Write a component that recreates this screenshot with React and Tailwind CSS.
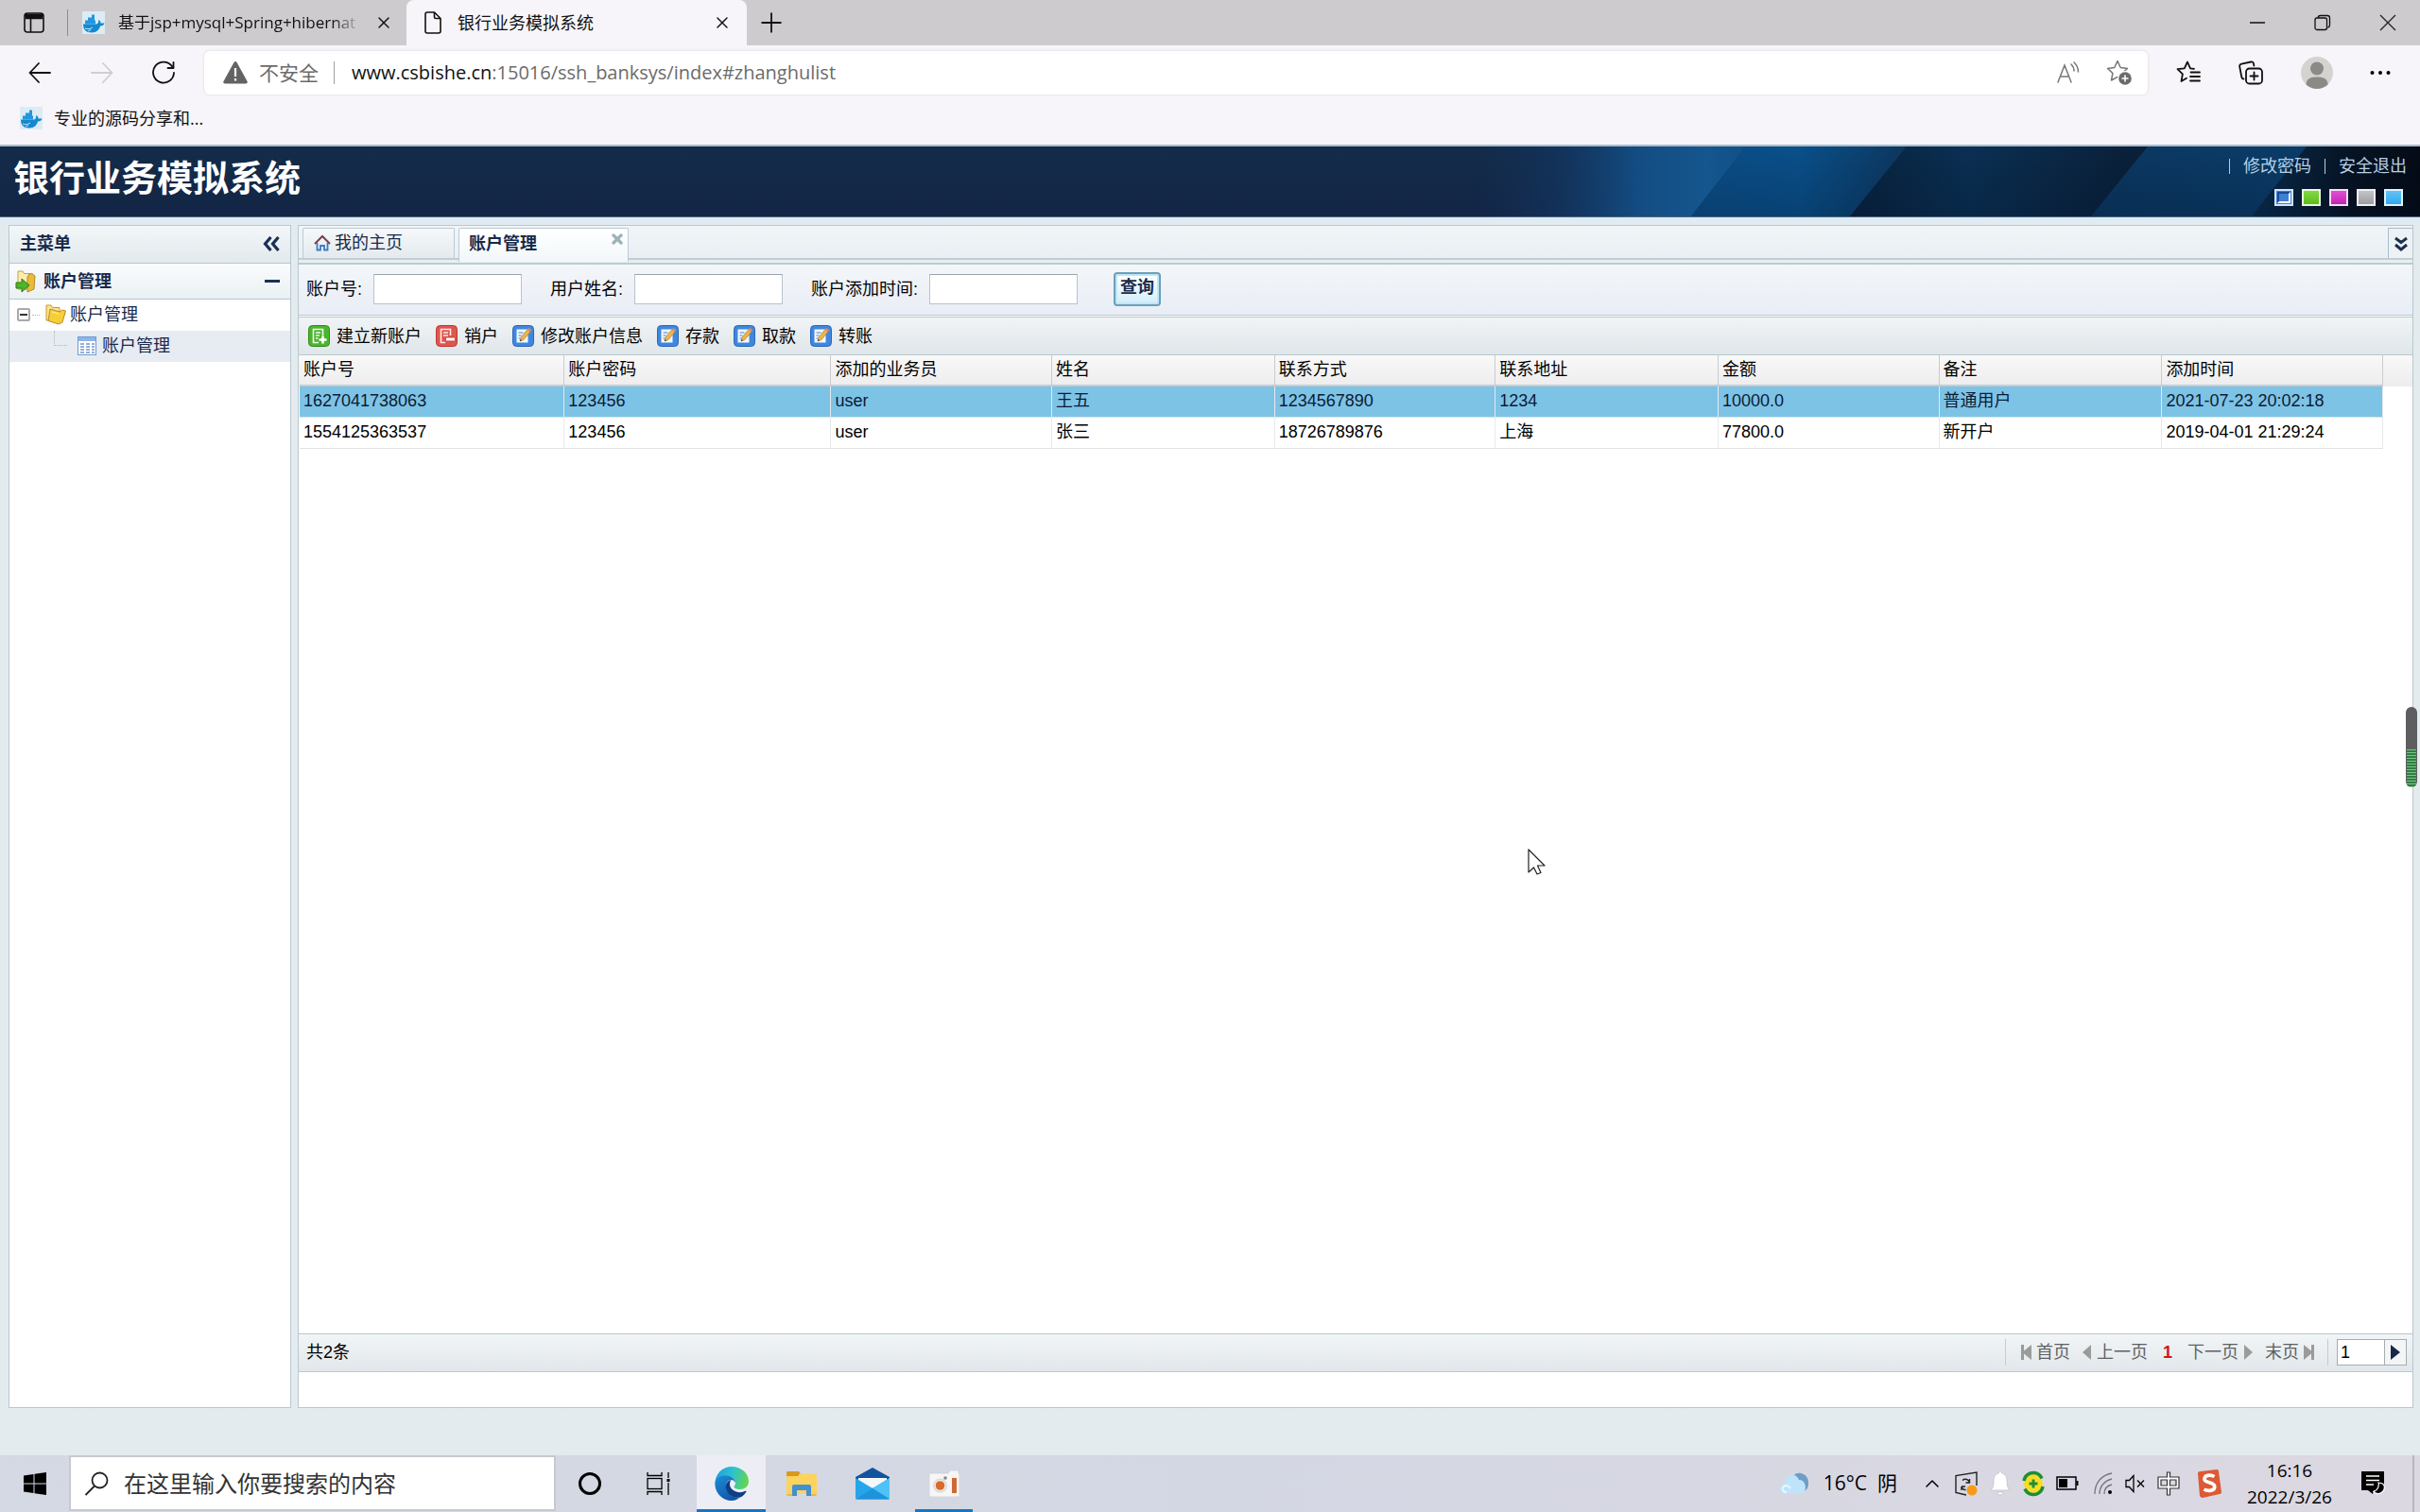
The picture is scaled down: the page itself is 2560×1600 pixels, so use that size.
import React, { useState } from "react";
import { ChevronUp, X } from "lucide-react";

const accounts = [
  { no: "1627041738063", pwd: "123456", clerk: "user", name: "王五", phone: "1234567890", address: "1234", amount: "10000.0", remark: "普通用户", time: "2021-07-23 20:02:18" },
  { no: "1554125363537", pwd: "123456", clerk: "user", name: "张三", phone: "18726789876", address: "上海", amount: "77800.0", remark: "新开户", time: "2019-04-01 21:29:24" },
];

const columns = [
  { key: "no", label: "账户号", width: "w-[12.7%]" },
  { key: "pwd", label: "账户密码", width: "w-[12.8%]" },
  { key: "clerk", label: "添加的业务员", width: "w-[10.6%]" },
  { key: "name", label: "姓名", width: "w-[10.7%]" },
  { key: "phone", label: "联系方式", width: "w-[10.6%]" },
  { key: "address", label: "联系地址", width: "w-[10.7%]" },
  { key: "amount", label: "金额", width: "w-[10.6%]" },
  { key: "remark", label: "备注", width: "w-[10.7%]" },
  { key: "time", label: "添加时间", width: "w-[10.6%]" },
];

/* ---------- icons ---------- */

const Whale = () => (
  <svg className="w-6 h-6 shrink-0" viewBox="0 0 24 24">
    <rect width="24" height="24" fill="#dcecf5" />
    <path d="M1 13.500h14c2-.5 2.500-2 2-4.500 2 1 2.500 2 2.500 3.500h4c-.5 2-2 3-4.500 3-1 4-4 7-9 7-6 0-9-3-9-9z" fill="#1488d0" />
    <path d="M3 9.500h11v4H3zM6 6.500h7v3H6zM10 3.500h3v3h-3z" fill="#2496e0" />
    <path d="M3 18c3 1 5 1 8-1M6 21l3-1.500" stroke="#bfe3f6" strokeWidth="1" fill="none" />
  </svg>
);

const TabActions = () => (
  <svg className="w-[22px] h-[22px]" viewBox="0 0 22 22" fill="none" stroke="#111" strokeWidth="1.6">
    <rect x="1" y="1" width="20" height="20" rx="3" />
    <path d="M2 4h18M2 6h18M1 3h20" strokeWidth="2.4" />
    <path d="M7.500 7v14" />
  </svg>
);

const FileIcon = () => (
  <svg className="w-5 h-6 shrink-0" viewBox="0 0 20 24" fill="none" stroke="#111" strokeWidth="1.6" strokeLinejoin="round">
    <path d="M4 1h7.500L18 7.500V21a2 2 0 0 1-2 2H4a2 2 0 0 1-2-2V3a2 2 0 0 1 2-2z" />
    <path d="M11.500 1v5a1.500 1.500 0 0 0 1.500 1.500h5" />
  </svg>
);

const BackArrow = () => (
  <svg className="w-6 h-6" viewBox="0 0 24 24" fill="none" stroke="currentColor" strokeWidth="1.8" strokeLinecap="round" strokeLinejoin="round">
    <path d="M23 12H1.500M11 2L1.500 12 11 22" />
  </svg>
);

const Refresh = () => (
  <svg className="w-[26px] h-[26px]" viewBox="0 0 26 26" fill="none" stroke="#111" strokeWidth="1.8" strokeLinecap="round" strokeLinejoin="round">
    <path d="M22.500 7A11 11 0 1 0 24 13M23.500 2v6h-6" />
  </svg>
);

const ReadAloud = () => (
  <svg className="w-6 h-6" viewBox="0 0 24 24" fill="none" stroke="#777" strokeWidth="1.500" strokeLinecap="round">
    <path d="M1 22L8 4l7 18M3.500 16h9M15 3c2 2 3 4 3 7M18 1c3 3 4.500 6 4.500 10" />
  </svg>
);

const STAR = "M12 1.500l3.200 7 7.300.9-5.400 5.100 1.400 7.500-6.500-3.700L5.500 22l1.400-7.500L1.500 9.400l7.300-.9z";

const StarPlus = () => (
  <svg className="w-7 h-7" viewBox="0 0 28 28">
    <path d={STAR} fill="none" stroke="#777" strokeWidth="1.500" strokeLinejoin="round" />
    <circle cx="20" cy="20" r="8" fill="#fff" />
    <circle cx="20" cy="20" r="6.800" fill="#6b6b6b" />
    <path d="M20 16.500v7M16.500 20h7" stroke="#fff" strokeWidth="1.600" />
  </svg>
);

const Favorites = () => (
  <svg className="w-[26px] h-[26px]" viewBox="0 0 26 26" fill="none" stroke="#111" strokeWidth="1.800" strokeLinecap="round" strokeLinejoin="round">
    <path d="M19 8.800l-4-.5L12 1.500 8.800 8.300l-7.300.9 5.400 5.100L5.500 22l5.500-3.200M15.500 12.500H25M15 17h10M15 21.500h10" />
  </svg>
);

const Collections = () => (
  <svg className="w-[26px] h-[26px]" viewBox="0 0 26 26" fill="none" stroke="#111" strokeWidth="1.800" strokeLinecap="round" strokeLinejoin="round">
    <path d="M5.500 19.500c-1.500 0-2-1-2.200-2L1.200 6.500c-.3-1.500.5-2.500 2-2.800l10-2.200c1.500-.3 2.500.5 2.800 2l.4 2" />
    <rect x="8" y="8.500" width="17" height="16" rx="3.500" />
    <path d="M16.500 12.500v8M12.500 16.500h8" />
  </svg>
);

const Avatar = () => (
  <svg className="w-[34px] h-[34px]" viewBox="0 0 34 34">
    <circle cx="17" cy="17" r="17" fill="#d5d3d0" />
    <circle cx="17" cy="12.500" r="7" fill="#8c8986" />
    <path d="M5.500 29.500C5.500 23 11 21.500 17 21.500s11.500 1.500 11.500 8a17 17 0 0 1-23 0z" fill="#8c8986" />
  </svg>
);

const HeaderArt = () => (
  <svg className="absolute right-0 top-0 h-full w-[1000px]" viewBox="0 0 1000 74" preserveAspectRatio="none">
    <defs>
      <linearGradient id="hg1" x1="0" x2="1">
        <stop offset="0" stopColor="#12305a" stopOpacity="0" />
        <stop offset="0.300" stopColor="#123764" stopOpacity="0.600" />
        <stop offset="0.600" stopColor="#134c82" />
        <stop offset="0.850" stopColor="#15568e" />
        <stop offset="1" stopColor="#115087" />
      </linearGradient>
      <linearGradient id="hg2" x1="0" x2="1">
        <stop offset="0" stopColor="#0c4d86" />
        <stop offset="0.500" stopColor="#09508b" />
        <stop offset="1" stopColor="#0d375f" />
      </linearGradient>
      <linearGradient id="hg3" x1="0" x2="1">
        <stop offset="0" stopColor="#08233f" />
        <stop offset="0.400" stopColor="#0a3054" />
        <stop offset="1" stopColor="#0a1f38" />
      </linearGradient>
      <linearGradient id="hg4" x1="0" x2="1">
        <stop offset="0" stopColor="#0b3862" />
        <stop offset="1" stopColor="#0a3c69" />
      </linearGradient>
      <linearGradient id="hg5" x1="0" x2="1">
        <stop offset="0" stopColor="#0a2d50" />
        <stop offset="0.600" stopColor="#061324" />
        <stop offset="1" stopColor="#050b17" />
      </linearGradient>
      <linearGradient id="hgs" x1="0" x2="0" y1="0" y2="1">
        <stop offset="0" stopColor="#000" stopOpacity="0" />
        <stop offset="1" stopColor="#00081c" stopOpacity="0.200" />
      </linearGradient>
    </defs>
    <path d="M0 0H287L229 74H0z" fill="url(#hg1)" />
    <path d="M287 0H457L397 74H229z" fill="url(#hg2)" />
    <path d="M457 0H712L652 74H397z" fill="url(#hg3)" />
    <path d="M712 0H880L822 74H652z" fill="url(#hg4)" />
    <path d="M880 0H1000V74H822z" fill="url(#hg5)" />
    <path d="M287 0H1000V74H229z" fill="url(#hgs)" />
  </svg>
);

const FolderArrow = () => (
  <svg className="w-6 h-6 shrink-0" viewBox="0 0 24 24">
    <path d="M3 1h5l1.500 2.500H16V20H3z" fill="#fbedb0" stroke="#c9a03c" />
    <path d="M15 4l3-.5 3 2.500-1 14-7 3V7z" fill="#e9bb3d" stroke="#b98a22" />
    <path d="M1 13h6V9l8 7-8 7v-4H1z" fill="#4cb52c" stroke="#2c7d16" />
  </svg>
);

const FolderOpen = () => (
  <svg className="w-[22px] h-[22px] shrink-0" viewBox="0 0 22 22">
    <path d="M1 1h5l1.500 2.500H15V17H1z" fill="#fbe58b" stroke="#c9982c" />
    <path d="M14 21L3 17.500 5 5l10 3 3-2 3.500 1L18 19z" fill="#f6ce38" stroke="#bb8a1c" />
    <path d="M7 8l7 2" stroke="#fff3b5" />
  </svg>
);

const GridIcon = () => (
  <svg className="w-5 h-5 shrink-0" viewBox="0 0 20 20">
    <rect x="0.500" y="0.500" width="19" height="19" fill="#fff" stroke="#6f9bd6" />
    <rect x="1" y="1" width="18" height="4" fill="#8db5ea" />
    <path d="M3 8h4m2 0h4m2 0h3M3 11h4m2 0h4m2 0h3M3 14h4m2 0h4m2 0h3M3 17h4m2 0h4m2 0h3" stroke="#6f97d0" strokeWidth="1.600" />
  </svg>
);

const HomeIcon = () => (
  <svg className="w-[18px] h-[18px] shrink-0" viewBox="0 0 18 18" fill="none">
    <path d="M3.500 9v7.500h3.500V12h4v4.500h3.500V9" stroke="#3c7cc0" strokeWidth="1.800" fill="#e8f1fb" />
    <path d="M1 10L9 2l8 8" stroke="#7d3d4a" strokeWidth="2" />
  </svg>
);

const AddIcon = () => (
  <svg className="w-[23px] h-[23px] shrink-0" viewBox="0 0 23 23">
    <rect x="0.500" y="0.500" width="22" height="22" rx="4" fill="#4bb52f" stroke="#2f8a1a" />
    <path d="M15.500 11V4.500h-10v14h5.500M8 8h5M8 11h4M8 14h2.500" stroke="#f0ffe9" strokeWidth="1.600" fill="none" />
    <path d="M15.500 11.500v8M11.500 15.500h8" stroke="#fff" strokeWidth="2.600" />
  </svg>
);

const RemoveIcon = () => (
  <svg className="w-[23px] h-[23px] shrink-0" viewBox="0 0 23 23">
    <rect x="0.500" y="0.500" width="22" height="22" rx="4" fill="#e0564e" stroke="#b93a34" />
    <path d="M15.500 11V4.500h-10v14h4.500M8 8h5M8 11h5" stroke="#ffeceb" strokeWidth="1.600" fill="none" />
    <rect x="10.500" y="13" width="10" height="4" rx="1" fill="#fff" stroke="#c9443e" />
  </svg>
);

const EditIcon = () => (
  <svg className="w-[23px] h-[23px] shrink-0" viewBox="0 0 23 23">
    <rect x="0.500" y="0.500" width="22" height="22" rx="4" fill="#3f87de" stroke="#2a66b8" />
    <rect x="4.500" y="4.500" width="12" height="14" fill="#f4f8fd" />
    <path d="M6.500 8h5M6.500 11h3M6.500 14h2" stroke="#7ba7dd" strokeWidth="1.400" />
    <path d="M8 17l1-4 7-8.500 3 2.500-7 8.500z" fill="#f0b548" stroke="#a87c34" strokeWidth="0.700" />
    <path d="M16 4.500l1.500-1.500 3 2.500-1.500 1.500z" fill="#d78a80" />
    <path d="M8 17l.5-2 1.500 1.200z" fill="#333" />
  </svg>
);

const EdgeIcon = () => (
  <svg className="w-9 h-9" viewBox="0 0 36 36">
    <defs>
      <linearGradient id="e1" x1="0" x2="1" y1="0.300" y2="0.500">
        <stop offset="0" stopColor="#1d9fe0" />
        <stop offset="0.500" stopColor="#2fc1d0" />
        <stop offset="1" stopColor="#62d74c" />
      </linearGradient>
      <linearGradient id="e2" x1="0" x2="0.600" y1="0" y2="1">
        <stop offset="0" stopColor="#1a8fd8" />
        <stop offset="1" stopColor="#1256a8" />
      </linearGradient>
    </defs>
    <path d="M0.500 15.500C2 6 9 0 18 0c10 0 18 7 18 15.500 0 5-4 8.500-9 8.500-4 0-6.500-1.500-6.500-2.800 0-.9 1.500-1.500 1.500-4.200C22 13 17 10 12 10 6 10 2 12.500.5 15.500z" fill="url(#e1)" />
    <path d="M0.500 15.500C2 12 6 9.500 11 9.500c6 0 11 3.500 11 7.500-1-2-2.500-3-4.500-3-4 0-6 4-5.500 8 .8 7 8 12 14.500 10.500C24 35 21 36 18 36 7 36-1 26 .5 15.500z" fill="url(#e2)" />
    <path d="M17.500 14c-4.500 1-6.500 5-5.500 9.500C13.500 30 20 34 27 32.500c3-1 5-3.500 6.500-6 .3-.7-.4-1-1-.7-7 3.500-16-.3-16.500-6.800-.1-2 .5-4 1.500-5z" fill="#0c3f86" />
  </svg>
);

const ExplorerIcon = () => (
  <svg className="w-8 h-[26px]" viewBox="0 0 32 26">
    <path d="M0 1.500Q0 0 1.500 0H13l2 3h-2v4H0z" fill="#d9991f" />
    <path d="M0 5h13l2.500-2.500H30q2 0 2 2V24H0z" fill="#fcd35c" />
    <path d="M6 26V16q0-2 2-2h16q2 0 2 2v10h-5v-6H11v6z" fill="#4191d2" />
    <path d="M0 24h6v2H2q-2 0-2-2zM26 24h6q0 2-2 2h-4z" fill="#e9b83e" />
  </svg>
);

const MailIcon = () => (
  <svg className="w-9 h-[34px]" viewBox="0 0 36 34">
    <path d="M0 10L18 0l18 10v4H0z" fill="#12539f" />
    <path d="M3 11h30v10H3z" fill="#f3f8fc" />
    <path d="M0 11l18 11L36 11v21q0 1.500-1.500 1.500h-33Q0 33.500 0 32z" fill="#26a6ea" />
    <path d="M36 11v22L18 22z" fill="#4fc3f7" />
    <path d="M0 33.500L18 22l18 11.500z" fill="#1d93dc" />
  </svg>
);

const RecorderIcon = () => (
  <svg className="w-8 h-7" viewBox="0 0 32 28">
    <path d="M0 3h20l2-3h9v3h1v25H0z" fill="#f7f6f7" stroke="#cfcdd2" strokeWidth="0.800" />
    <circle cx="11.500" cy="16" r="7.500" fill="#dcd6d8" />
    <circle cx="11.500" cy="16" r="6" fill="#f3efef" />
    <circle cx="11.500" cy="16" r="4.800" fill="#d96a2b" />
    <circle cx="17" cy="8" r="1.800" fill="#8b8083" />
    <rect x="24" y="8" width="5" height="16" fill="#cf6a33" />
  </svg>
);

const TrayIcons = () => (
  <div className="flex items-center">
    <svg className="w-6 h-[26px]" viewBox="0 0 24 26" fill="none" stroke="#222" strokeWidth="1.400">
      <path d="M12 25L1 22.500V4.500l22-3.500v14M8 9.500a4.500 4.500 0 0 1 7.500 2.500m0-4v4h-4M7 16h4m-4 0v4m0-3.500a4.500 4.500 0 0 0 4.500 3" />
      <circle cx="18" cy="20" r="5.500" fill="#fb9a17" stroke="none" />
    </svg>
    <svg className="ml-[13px] w-[22px] h-7" viewBox="0 0 22 28" fill="#fff" stroke="#c0c2ca" strokeWidth="0.800">
      <path d="M11 1c1 0 1.500.7 1.500 1.800C16.500 4 18 7 18 11c0 5 1 8 3 10H1c2-2 3-5 3-10 0-4 1.500-7 5.500-8.200C9.500 1.700 10 1 11 1zM8 23h6c0 2-1.500 3-3 3s-3-1-3-3z" />
    </svg>
    <svg className="ml-3 w-6 h-7" viewBox="0 0 24 28">
      <ellipse cx="12" cy="14" rx="10" ry="10" fill="#f7dc28" />
      <path d="M2 11C3 5 8 2 13 2.500c4 .5 6.500 2.500 8 6M22 17c-1 6-6 9-11 8.500-4-.5-6.500-2.500-8-6" fill="none" stroke="#1d8e36" strokeWidth="3.500" />
      <path d="M12 9.500v9M7.500 14h9" stroke="#1d8e36" strokeWidth="2.800" />
    </svg>
    <svg className="ml-3 w-6 h-4" viewBox="0 0 24 16">
      <rect x="1" y="1" width="20" height="13" fill="none" stroke="#000" strokeWidth="1.500" />
      <rect x="3" y="3" width="9" height="9" />
      <rect x="21.500" y="5" width="2" height="5" />
    </svg>
    <svg className="ml-4 w-5 h-6" viewBox="0 0 20 24" fill="none" stroke="#77777d" strokeWidth="1.300">
      <path d="M1 23C1 11 8 3 19 1M6 23C6 15 11 9 19 7M11 23c0-5 3-9 8-10" />
      <circle cx="17" cy="21" r="2" fill="#000" stroke="none" />
    </svg>
    <svg className="ml-[13px] w-[22px] h-5" viewBox="0 0 22 20" fill="none" stroke="#000" strokeWidth="1.300">
      <path d="M1 6.500h3.500L9 1.500v17l-4.500-5H1zM13 6.500l7 7m0-7l-7 7" />
    </svg>
    <svg className="ml-3 w-6 h-[26px]" viewBox="0 0 24 26" fill="#fff" stroke="#333" strokeWidth="1.200">
      <path fillRule="evenodd" d="M10.500 1h3v5H23v12h-9.500v7h-3v-7H1V6h9.500zM4 9v6h6.500V9zM13.500 9v6H20V9z" />
    </svg>
    <svg className="ml-[18px] w-[26px] h-[30px]" viewBox="0 0 26 30">
      <path d="M1 4Q1 2 4 2l17-2q2 0 2 2l3 22q0 2-2 2L6 30q-2 0-3-2z" fill="#dd5a34" />
      <path d="M18.500 7.500C14 5 7.500 6 8 10.500c.5 4 10.500 2.500 10.800 7.500.3 4.500-7 5.500-11.300 3" stroke="#fff" strokeWidth="3.600" fill="none" />
    </svg>
  </div>
);

const PageArrow = ({ flip, bar }) => (
  <svg className={`w-[11px] h-4 shrink-0 ${flip ? "rotate-180" : ""}`} viewBox="0 0 11 16" fill="#9b9b9b">
    {bar ? <path d="M0 0h3v6.500L11 0v16L3 9.500V16H0z" /> : <path d="M1 8l9-8v16z" />}
  </svg>
);

/* ---------- browser chrome ---------- */

const Browser = () => (
  <div className="font-['Open_Sans','Noto_Sans_CJK_SC',sans-serif] text-[18px] leading-6 text-[#111] bg-[#f7f5f9]">
    <div className="h-12 bg-[#cdcbce] flex items-stretch">
      <button aria-label="Tab actions" className="ml-[25px] flex items-center"><TabActions /></button>
      <div className="w-px my-[10px] ml-6 bg-[#8d8b8e]" />
      <div className="w-[358px] pl-[15px] pr-[14px] flex items-center gap-[14px]">
        <Whale />
        <span className="flex-1 whitespace-nowrap text-[17px] [mask-image:linear-gradient(to_right,black_88%,transparent)]">基于jsp+mysql+Spring+hibernat</span>
        <button aria-label="Close tab"><X className="w-5 h-5" strokeWidth={1.7} /></button>
      </div>
      <div className="w-[360px] pl-[18px] pr-4 flex items-center gap-4 rounded-t-lg bg-[#f7f5f9]">
        <FileIcon />
        <span className="flex-1 whitespace-nowrap">银行业务模拟系统</span>
        <button aria-label="Close tab"><X className="w-5 h-5" strokeWidth={1.7} /></button>
      </div>
      <button aria-label="New tab" className="ml-[14px]">
        <svg className="w-6 h-6" viewBox="0 0 24 24" stroke="#111" strokeWidth="1.800"><path d="M12 1.500v21M1.500 12h21" /></svg>
      </button>
      <div className="ml-auto mr-[25px] flex items-center gap-[51px]">
        <button aria-label="Minimize">
          <svg className="w-[18px] h-[18px]" viewBox="0 0 18 18"><path d="M1 9h16" stroke="#111" strokeWidth="1.500" /></svg>
        </button>
        <button aria-label="Restore">
          <svg className="w-[18px] h-[18px]" viewBox="0 0 18 18" fill="none" stroke="#111" strokeWidth="1.300">
            <rect x="1" y="4" width="12.500" height="12.500" rx="2" /><path d="M4 3.500Q4.500 1.500 6.500 1.500H14q2.500 0 2.500 2.500v7.500q0 2-2 2.500" />
          </svg>
        </button>
        <button aria-label="Close window">
          <svg className="w-[18px] h-[18px]" viewBox="0 0 18 18"><path d="M1 1l16 16M17 1L1 17" stroke="#222" strokeWidth="1.300" /></svg>
        </button>
      </div>
    </div>

    <div className="h-[57px] flex items-center pl-[30px] pr-[30px]">
      <button aria-label="Back"><BackArrow /></button>
      <button aria-label="Forward" className="ml-[42px] rotate-180 text-[#cfcdd1]"><BackArrow /></button>
      <button aria-label="Refresh" className="ml-10"><Refresh /></button>
      <div className="ml-[30px] flex-1 h-[46px] bg-white rounded-md shadow-[0_0_3px_#d8d6da] flex items-center pl-5 pr-4">
        <svg className="w-[26px] h-6 shrink-0" viewBox="0 0 26 24">
          <path d="M11.500 1q1.500-2 3 0L25.500 21q1 2-1.500 2.500H2Q-.5 23 .5 21z" fill="#636363" />
          <path d="M13 7v9M13 18v2.500" stroke="#fff" strokeWidth="2.200" />
        </svg>
        <span className="ml-3 text-[21px] text-[#6b6b6b]">不安全</span>
        <span className="ml-4 w-px h-6 bg-[#a0a0a0]" />
        <div className="ml-[18px] flex-1 text-[20px] text-[#6b6b6b]"><span className="text-[#111]">www.csbishe.cn</span>:15016/ssh_banksys/index#zhanghulist</div>
        <button aria-label="Read aloud"><ReadAloud /></button>
        <button aria-label="Add favorite" className="ml-7"><StarPlus /></button>
      </div>
      <div className="ml-[30px] flex items-center">
        <button aria-label="Favorites"><Favorites /></button>
        <button aria-label="Collections" className="ml-10"><Collections /></button>
        <button aria-label="Profile" className="ml-10"><Avatar /></button>
        <button aria-label="Menu" className="ml-[38px]">
          <svg className="w-6 h-6" viewBox="0 0 24 24"><circle cx="3.500" cy="12" r="2" /><circle cx="12" cy="12" r="2" /><circle cx="20.500" cy="12" r="2" /></svg>
        </button>
      </div>
    </div>

    <div className="h-12 flex items-start pl-[21px] pt-2">
      <a href="#bookmark" className="flex items-center gap-3"><Whale />专业的源码分享和...</a>
    </div>
  </div>
);

/* ---------- application ---------- */

const AppHeader = () => (
  <header className="relative h-[77px] border-t-2 border-t-[#a9bccb] border-b border-b-[#51657c] bg-linear-to-b from-[#132c49] to-[#132546] flex justify-between">
    <HeaderArt />
    <h1 className="relative pl-[14px] pt-[5px] text-[38px] leading-[52px] font-bold text-white font-['Noto_Sans_CJK_SC',sans-serif]">银行业务模拟系统</h1>
    <div className="relative pr-[14px] pt-2 flex flex-col items-end">
      <div className="flex items-center gap-[14px] text-[18px] leading-[26px] text-[#b4cfe4]">
        <span className="w-px h-4 bg-[#b4cfe4]" />
        <a href="#password">修改密码</a>
        <span className="w-px h-4 bg-[#b4cfe4]" />
        <a href="#logout">安全退出</a>
      </div>
      <div className="mt-[11px] mr-1 flex gap-[9px]">
        <button aria-label="Blue theme" className="w-5 h-[18px] border-2 border-[#cfe4fb] bg-[#3f7fd4] p-px">
          <span className="block w-full h-full border-2 border-[#1d4a98] border-r-white border-b-white" />
        </button>
        <button aria-label="Green theme" className="w-5 h-[18px] border-2 border-[#e8f7dc] bg-linear-to-b from-[#83d842] to-[#5cbd12]" />
        <button aria-label="Pink theme" className="w-5 h-[18px] border-2 border-[#f9dcf5] bg-linear-to-b from-[#e24fd6] to-[#c421b5]" />
        <button aria-label="Gray theme" className="w-5 h-[18px] border-2 border-[#efeff0] bg-linear-to-b from-[#c5c4c8] to-[#9d9ca2]" />
        <button aria-label="Sky theme" className="w-5 h-[18px] border-2 border-[#dff2fd] bg-linear-to-b from-[#62c3f6] to-[#2fa8ee]" />
      </div>
    </div>
  </header>
);

const Sidebar = () => (
  <aside className="w-[299px] shrink-0 border border-[#b8c8cf] bg-white text-[#16294b]">
    <div className="h-10 px-[11px] pb-px flex items-center justify-between border-b border-[#b8c8cf] bg-linear-to-b from-[#f3f7f9] to-[#e1e9ec] font-bold">
      主菜单
      <button aria-label="Collapse menu">
        <svg className="w-[18px] h-4" viewBox="0 0 18 16" fill="none" stroke="#1b2f52" strokeWidth="3.200"><path d="M8.500 1L2.500 8l6 7M16.500 1l-6 7 6 7" /></svg>
      </button>
    </div>
    <div className="h-[38px] pl-[6px] pr-[11px] flex items-center border-b border-[#b8c8cf] bg-linear-to-b from-[#fbfcfd] to-[#eaf0f3] font-bold">
      <FolderArrow />
      <span className="ml-[6px] flex-1">账户管理</span>
      <button aria-label="Collapse group" className="h-4 flex items-center"><span className="w-4 h-[3px] bg-[#1b2f52]" /></button>
    </div>
    <div className="h-[33px] pl-2 pb-px flex items-center">
      <button aria-label="Collapse node" className="w-[14px] h-[14px] border-2 border-[#a9a9ad] rounded-xs flex items-center justify-center"><span className="w-2 h-[2px] bg-[#333]" /></button>
      <span className="w-2 ml-[2px] border-t border-dotted border-[#bbb]" />
      <span className="ml-[6px]"><FolderOpen /></span>
      <span className="ml-1">账户管理</span>
    </div>
    <div className="h-[33px] pl-[47px] pb-px flex items-center bg-[#e7ebf2]">
      <span className="w-[14px] h-4 mb-4 border-l border-b border-dotted border-[#b5b5ba]" />
      <span className="ml-[11px]"><GridIcon /></span>
      <a href="#zhanghulist" className="ml-[6px]">账户管理</a>
    </div>
  </aside>
);

const Field = ({ id, label }) => (
  <div className="flex items-center gap-3">
    <label htmlFor={id}>{label}:</label>
    <input id={id} type="text" className="w-[157px] h-8 px-1 bg-white border border-[#b9c3ca] border-t-[#9aa5ad] outline-none" />
  </div>
);

const ToolButton = ({ icon: Icon, children }) => (
  <button className="flex items-center gap-[7px]"><Icon />{children}</button>
);

const AccountGrid = () => {
  const [selected, setSelected] = useState(accounts[0].no);

  return (
    <div className="pl-px pr-[31px] bg-linear-to-b from-[#f9f9f9] to-[#eeeced] bg-size-[100%_33px] bg-no-repeat">
      <table className="w-full table-fixed border-collapse text-left">
        <thead>
          <tr className="h-8 border-b-2 border-[#c3cdd4]">
            {columns.map((c) => (
              <th key={c.key} className={`${c.width} p-0 pl-1 pb-px font-normal border-r border-[#c9ccd0]`}>{c.label}</th>
            ))}
          </tr>
        </thead>
        <tbody className="bg-white">
          {accounts.map((a) => (
            <tr
              key={a.no}
              onClick={() => setSelected(a.no)}
              className={`h-[33px] border-b border-[#e2e2e4] ${selected === a.no ? "bg-[#7dc3e6] text-[#0d1b33]" : "bg-white"}`}
            >
              {columns.map((c) => (
                <td key={c.key} className="p-0 pl-1 pb-[2px] border-r border-[#e6e9ec]">{a[c.key]}</td>
              ))}
            </tr>
          ))}
        </tbody>
      </table>
    </div>
  );
};

const Pager = () => (
  <div className="h-[41px] pl-2 pr-[6px] pb-px flex items-center border-y border-[#b8c8cf] bg-linear-to-b from-[#f2f5f7] to-[#e1e7ea]">
    <span className="flex-1 pb-px">共2条</span>
    <div className="flex items-center text-[#5f6163]">
      <span className="w-px h-7 bg-[#c3ccd1]" />
      <button className="ml-4 flex items-center gap-[5px]"><PageArrow bar />首页</button>
      <button className="ml-3 flex items-center gap-[5px]"><PageArrow />上一页</button>
      <span className="mx-4 font-bold text-[#d2161b]">1</span>
      <button className="flex items-center gap-[5px]">下一页<PageArrow flip /></button>
      <button className="ml-3 flex items-center gap-[5px]">末页<PageArrow bar flip /></button>
      <span className="ml-[14px] w-px h-7 bg-[#c3ccd1]" />
    </div>
    <input aria-label="Page number" defaultValue="1" className="ml-[9px] w-[51px] h-7 px-[3px] bg-white border border-[#a7acb1] text-black outline-none" />
    <button aria-label="Go to page" className="w-[23px] h-7 border border-l-0 border-[#a7acb1] bg-[#f4f5f6] flex items-center justify-center">
      <svg className="w-[10px] h-4" viewBox="0 0 10 16" fill="#16294b"><path d="M0 0l10 8-10 8z" /></svg>
    </button>
  </div>
);

const Content = () => (
  <main className="flex-1 min-w-0 flex flex-col border border-[#b8c8cf] bg-white text-black">
    <div className="h-[41px] shrink-0 border-b-2 border-[#bccbd1] bg-[#e6f0f3] flex flex-col">
      <div className="h-9 pt-[2px] pl-1 flex items-stretch border-b-2 border-[#c0ced3] bg-linear-to-b from-[#f1f5f7] to-[#e9eff5] text-[#16294b]">
        <button className="w-[161px] pl-[11px] pb-px flex items-center gap-1 border border-b-0 border-[#bccbd3] rounded-t-xs bg-linear-to-b from-[#f6f8fa] to-[#e3eaee]">
          <HomeIcon />我的主页
        </button>
        <div className="w-[180px] h-9 z-1 ml-1 pl-[10px] pr-[3px] pb-1 flex justify-between border border-b-0 border-[#bccbd3] rounded-t-xs bg-linear-to-b from-white to-[#f2f7f9]">
          <button className="font-bold">账户管理</button>
          <button aria-label="Close panel" className="h-5 pt-px"><X className="w-4 h-4 text-[#9eb3b9]" strokeWidth={5} /></button>
        </div>
        <button aria-label="More tabs" className="ml-auto w-[26px] flex items-center justify-center border border-r-0 border-b-0 border-[#a9bdcb] bg-[#edf2f5]">
          <svg className="w-[14px] h-4" viewBox="0 0 14 16" fill="none" stroke="#1b2f52" strokeWidth="3"><path d="M1 2l6 4.500L13 2M1 9l6 5 6-5" /></svg>
        </button>
      </div>
    </div>

    <form className="h-[54px] shrink-0 pl-2 pb-px flex items-center gap-[30px] bg-linear-to-b from-[#f3f6f9] to-[#e9edf5] border-b border-[#b8c8cf]" onSubmit={(e) => e.preventDefault()}>
      <Field id="accountNo" label="账户号" />
      <Field id="userName" label="用户姓名" />
      <Field id="createdAt" label="账户添加时间" />
      <button type="submit" className="ml-2 h-9 px-[5px] pb-1 rounded-sm border-2 border-[#6b9fba] bg-linear-to-b from-white to-[#d3edf9] shadow-[inset_0_0_0_2px_#bfe6f7] font-bold text-[#1b2b4a]">查询</button>
    </form>

    <div className="h-[41px] shrink-0 mt-px pl-[10px] flex items-center gap-[15px] border-y border-[#b8c8cf] bg-linear-to-b from-[#f1f4f6] to-[#dfe6e9]">
      <ToolButton icon={AddIcon}>建立新账户</ToolButton>
      <ToolButton icon={RemoveIcon}>销户</ToolButton>
      <ToolButton icon={EditIcon}>修改账户信息</ToolButton>
      <ToolButton icon={EditIcon}>存款</ToolButton>
      <ToolButton icon={EditIcon}>取款</ToolButton>
      <ToolButton icon={EditIcon}>转账</ToolButton>
    </div>

    <div className="flex-1"><AccountGrid /></div>
    <Pager />
    <div className="h-[37px] shrink-0" />
  </main>
);

const Taskbar = () => (
  <footer className="h-[60px] shrink-0 flex items-stretch bg-linear-to-r from-[#d5d9e3] via-[#d3d7e3] to-[#dcd8e2] font-['Open_Sans','Noto_Sans_CJK_SC',sans-serif] text-black">
    <button aria-label="Start" className="w-[73px] flex items-center justify-center">
      <svg className="w-6 h-6" viewBox="0 0 24 24"><path d="M0 3.400L10.500 2v9.500H0zM11.500 1.800L24 0v11.500H11.500zM0 12.500h10.500V22L0 20.600zM11.500 12.500H24V24l-12.500-1.800z" /></svg>
    </button>
    <label className="w-[515px] mb-px pl-[14px] flex items-center gap-4 border-2 border-[#c8c9ce] bg-white">
      <svg className="w-[26px] h-[26px] shrink-0" viewBox="0 0 26 26" fill="none" stroke="#222" strokeWidth="1.800"><circle cx="16.500" cy="9.500" r="8" /><path d="M11 15.500L1.500 25" /></svg>
      <input type="text" placeholder="在这里输入你要搜索的内容" className="flex-1 text-[24px] leading-8 placeholder:text-[#333] outline-none" />
    </label>
    <button aria-label="Cortana" className="ml-6 flex items-center"><span className="w-6 h-6 rounded-full border-3 border-black" /></button>
    <button aria-label="Task view" className="ml-12 flex items-center">
      <svg className="w-[26px] h-6" viewBox="0 0 26 24" fill="none" stroke="#000" strokeWidth="1.300">
        <path d="M1 0v3.500h15V0M1 24v-3.500h15V24M23 0v6M23 11v13" /><rect x="1" y="6.500" width="15" height="11" />
        <rect x="21.500" y="7" width="3" height="3" fill="#000" stroke="none" />
      </svg>
    </button>
    <button aria-label="Edge" className="ml-[27px] w-[73px] pt-[3px] flex items-center justify-center bg-[#edeef5] border-b-3 border-[#1975c0]"><EdgeIcon /></button>
    <button aria-label="File Explorer" className="ml-[22px] flex items-center"><ExplorerIcon /></button>
    <button aria-label="Mail" className="ml-[41px] flex items-center"><MailIcon /></button>
    <button aria-label="Recorder" className="ml-[27px] w-[61px] pt-[3px] flex items-center justify-center border-b-3 border-[#1975c0]"><RecorderIcon /></button>

    <div className="ml-auto flex items-center">
      <svg className="w-8 h-6" viewBox="0 0 32 24">
        <path d="M13 9C14 3 18 0 23 1c5 1 8 5 8 10s-1 8-6 9z" fill="#6f9dc6" />
        <path d="M7 23c-8 0-9-10-1-11C5 2 18-1 21 8c8-1 10 14 1 15z" fill="#bfe3f8" />
        <path d="M8 21c-5 0-6-6-1-7 3 0 4 1 5 3" stroke="#e7f6ff" strokeWidth="2" fill="none" />
      </svg>
      <span className="ml-[15px] text-[21px] whitespace-nowrap">16°C&nbsp; 阴</span>
      <button aria-label="Hidden icons" className="ml-[25px] mr-3"><ChevronUp className="w-6 h-6" strokeWidth={1.5} /></button>
      <TrayIcons />
      <div className="ml-6 w-[96px] text-center text-[19px] leading-7 self-start pt-[2px]">
        <div>16:16</div>
        <div>2022/3/26</div>
      </div>
      <button aria-label="Notifications" className="ml-7">
        <svg className="w-[26px] h-7" viewBox="0 0 26 28">
          <path d="M0 1h24v20H13l-1 4-5-4H0z" />
          <path d="M5 6h14M5 10.500h14M5 15h8" stroke="#fff" strokeWidth="1.300" />
          <path d="M18 13c1 4-1 8-5 9.500 5 5 13 0 11-6.500-1-2-3-3-6-3z" stroke="#fff" strokeWidth="1.200" />
        </svg>
      </button>
      <span className="ml-7 mr-[6px] w-[2px] h-[60px] bg-[#b9b6c1]" />
    </div>
  </footer>
);

const App = () => (
  <div className="relative min-h-screen flex flex-col bg-[#e4ebee]">
    <Browser />
    <div className="flex-1 flex flex-col text-[18px] leading-[26px] font-['Liberation_Sans','Noto_Sans_CJK_SC',sans-serif]">
      <AppHeader />
      <div className="flex-1 flex gap-[7px] pl-[9px] pr-[7px] pt-2 pb-[50px] bg-linear-to-b from-[#dcebf8] to-[#e4ebee] to-[10px]">
        <Sidebar />
        <Content />
      </div>
    </div>
    <Taskbar />

    {/* volume gauge on the screen edge */}
    <div className="absolute right-[3px] top-[748px] w-3 h-[85px] rounded-full bg-[#5e5e60] overflow-hidden flex flex-col justify-end">
      <div className="h-10 mx-px bg-[repeating-linear-gradient(to_bottom,#6fca80_0_1px,#357a45_1px_3px)]" />
    </div>

    {/* mouse pointer */}
    <svg className="absolute left-[1616px] top-[898px] w-5 h-7 pointer-events-none" viewBox="0 0 20 28">
      <path d="M1 1v24l5.500-5 3.500 7 4-1.500-3.500-7.500H18z" fill="#fff" stroke="#222" strokeWidth="1.200" strokeLinejoin="round" />
    </svg>
  </div>
);

export default App;
